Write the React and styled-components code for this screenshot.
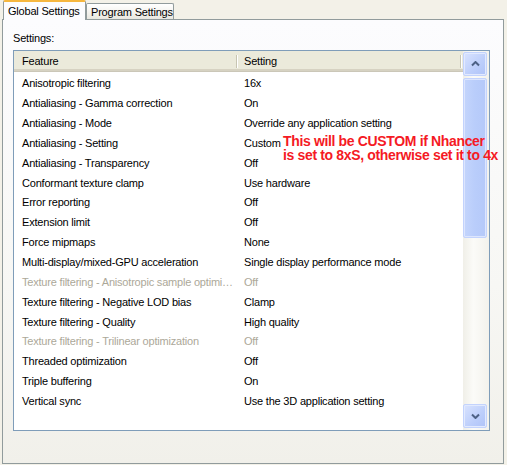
import React from "react";
import styled, { createGlobalStyle } from "styled-components";

const Global = createGlobalStyle`
  html, body { margin: 0; padding: 0; background: #f3f1e8; }
  body { font-family: "Liberation Sans", Arial, sans-serif; }
`;

const Page = styled.div`
  width: 507px;
  height: 465px;
  display: flex;
  flex-direction: column;
  background: #f3f1e8;
  overflow: hidden;
  font-family: "Liberation Sans", Arial, sans-serif;
  font-size: 11px;
  letter-spacing: -0.2px;
  color: #000;
`;

const TabStrip = styled.div`
  display: flex;
  align-items: flex-end;
  height: 19px;
  padding-left: 3px;
  position: relative;
  z-index: 1;
`;

const Tab = styled.div`
  box-sizing: border-box;
  height: ${(p) => (p.$active ? "20px" : "16px")};
  margin-bottom: ${(p) => (p.$active ? "-1px" : "0")};
  width: ${(p) => p.$w}px;
  padding-left: 4px;
  display: flex;
  align-items: center;
  border: 1px solid #919b9c;
  border-bottom: none;
  border-top: ${(p) => (p.$active ? "2px solid #f6b73f" : "1px solid #919b9c")};
  border-radius: 2px 2px 0 0;
  background: ${(p) =>
    p.$active ? "#fcfcfe" : "linear-gradient(#ffffff, #f3f2ed 60%, #e8e7e0)"};
  white-space: nowrap;
  padding-top: ${(p) => (p.$active ? "0" : "1px")};
`;

const TabPage = styled.div`
  box-sizing: border-box;
  margin: 0 3px 1px 2px;
  height: 446px;
  border: 1px solid #919b9c;
  background: linear-gradient(#fcfcfe, #f7f7f4 60%, #f1f0ea);
  padding: 11px 13px 0 10px;
  display: flex;
  flex-direction: column;
`;

const Caption = styled.div`
  height: 14px;
  line-height: 14px;
  margin-bottom: 5px;
`;

const ListBox = styled.div`
  position: relative;
  box-sizing: border-box;
  height: 381px;
  border: 1px solid #7f9db9;
  background: #fff;
  display: grid;
  grid-template-columns: 449px 1fr;
`;

const ListArea = styled.div`
  display: flex;
  flex-direction: column;
  overflow: hidden;
`;

const Header = styled.div`
  box-sizing: border-box;
  height: 21px;
  display: grid;
  grid-template-columns: 223px 224px 1fr;
  background: #ebeadb;
  border-bottom: 1px solid #cbc7b8;
  box-shadow: inset 0 -2px 0 #d6d2c2;
`;

const HeaderCell = styled.div`
  position: relative;
  display: flex;
  align-items: center;
  padding-left: ${(p) => p.$pad}px;
  padding-bottom: 1px;
  &::after {
    content: "";
    position: absolute;
    right: 0;
    top: 4px;
    bottom: 3px;
    width: 1px;
    background: #c7c5b2;
    box-shadow: 1px 0 0 #fff;
  }
`;

const Rows = styled.div`
  display: flex;
  flex-direction: column;
  padding-top: 1.5px;
`;

const Row = styled.div`
  height: 19.85px;
  display: grid;
  grid-template-columns: 223px 1fr;
  align-items: center;
  color: ${(p) => (p.$disabled ? "#aca899" : "#000")};
`;

const Cell = styled.div`
  padding-left: ${(p) => p.$pad}px;
  padding-right: 3px;
  white-space: nowrap;
  overflow: hidden;
  text-overflow: ellipsis;
`;

const ScrollBar = styled.div`
  display: flex;
  flex-direction: column;
  padding: 1px 2px 2px 0;
  background: linear-gradient(90deg, #f0efe8, #fbfbf8 40%, #f3f2ec);
`;

const ScrollButton = styled.div`
  box-sizing: border-box;
  height: 24px;
  border: 1px solid #c3d3fd;
  border-radius: 2px;
  background: linear-gradient(135deg, #d9e3fe, #bccefb 60%, #afc3f8);
  box-shadow: inset 0 0 0 1px #e2eafe;
  display: flex;
  align-items: center;
  justify-content: center;
`;

const Thumb = styled.div`
  box-sizing: border-box;
  height: 160px;
  margin: 2px 0 0;
  border: 1px solid #c3d3fd;
  border-radius: 2px;
  background: linear-gradient(90deg, #c4d5fc, #b9cdfb 50%, #b5c9f9);
  box-shadow: inset 0 0 0 1px #dde6fe;
`;

const Track = styled.div`
  flex: 1;
`;

const Annotation = styled.div`
  position: absolute;
  left: 269px;
  top: 83px;
  color: #f51a24;
  font-weight: bold;
  font-size: 14px;
  line-height: 14px;
  letter-spacing: -0.35px;
  white-space: nowrap;
  z-index: 2;
`;

const Arrow = ({ down }) => (
  <svg width="9" height="6" viewBox="0 0 9 6">
    <path
      d={down ? "M1 1.5 L4.5 5 L8 1.5" : "M1 4.5 L4.5 1 L8 4.5"}
      fill="none"
      stroke="#4d6185"
      strokeWidth="2"
    />
  </svg>
);

const rows = [
  ["Anisotropic filtering", "16x"],
  ["Antialiasing - Gamma correction", "On"],
  ["Antialiasing - Mode", "Override any application setting"],
  ["Antialiasing - Setting", "Custom"],
  ["Antialiasing - Transparency", "Off"],
  ["Conformant texture clamp", "Use hardware"],
  ["Error reporting", "Off"],
  ["Extension limit", "Off"],
  ["Force mipmaps", "None"],
  ["Multi-display/mixed-GPU acceleration", "Single display performance mode"],
  ["Texture filtering - Anisotropic sample optimization", "Off", true],
  ["Texture filtering - Negative LOD bias", "Clamp"],
  ["Texture filtering - Quality", "High quality"],
  ["Texture filtering - Trilinear optimization", "Off", true],
  ["Threaded optimization", "Off"],
  ["Triple buffering", "On"],
  ["Vertical sync", "Use the 3D application setting"],
];

export default function App() {
  return (
    <>
      <Global />
      <Page>
        <TabStrip>
          <Tab $active $w={83}>Global Settings</Tab>
          <Tab $w={88}>Program Settings</Tab>
        </TabStrip>
        <TabPage>
          <Caption>Settings:</Caption>
          <ListBox>
            <ListArea>
              <Header>
                <HeaderCell $pad={8}>Feature</HeaderCell>
                <HeaderCell $pad={7}>Setting</HeaderCell>
                <div />
              </Header>
              <Rows>
                {rows.map(([f, s, d]) => (
                  <Row key={f} $disabled={d}>
                    <Cell $pad={8}>{f}</Cell>
                    <Cell $pad={7}>{s}</Cell>
                  </Row>
                ))}
              </Rows>
            </ListArea>
            <ScrollBar>
              <ScrollButton>
                <Arrow />
              </ScrollButton>
              <Thumb />
              <Track />
              <ScrollButton>
                <Arrow down />
              </ScrollButton>
            </ScrollBar>
            <Annotation>
              This will be CUSTOM if Nhancer
              <br />
              is set to 8xS, otherwise set it to 4x
            </Annotation>
          </ListBox>
        </TabPage>
      </Page>
    </>
  );
}
